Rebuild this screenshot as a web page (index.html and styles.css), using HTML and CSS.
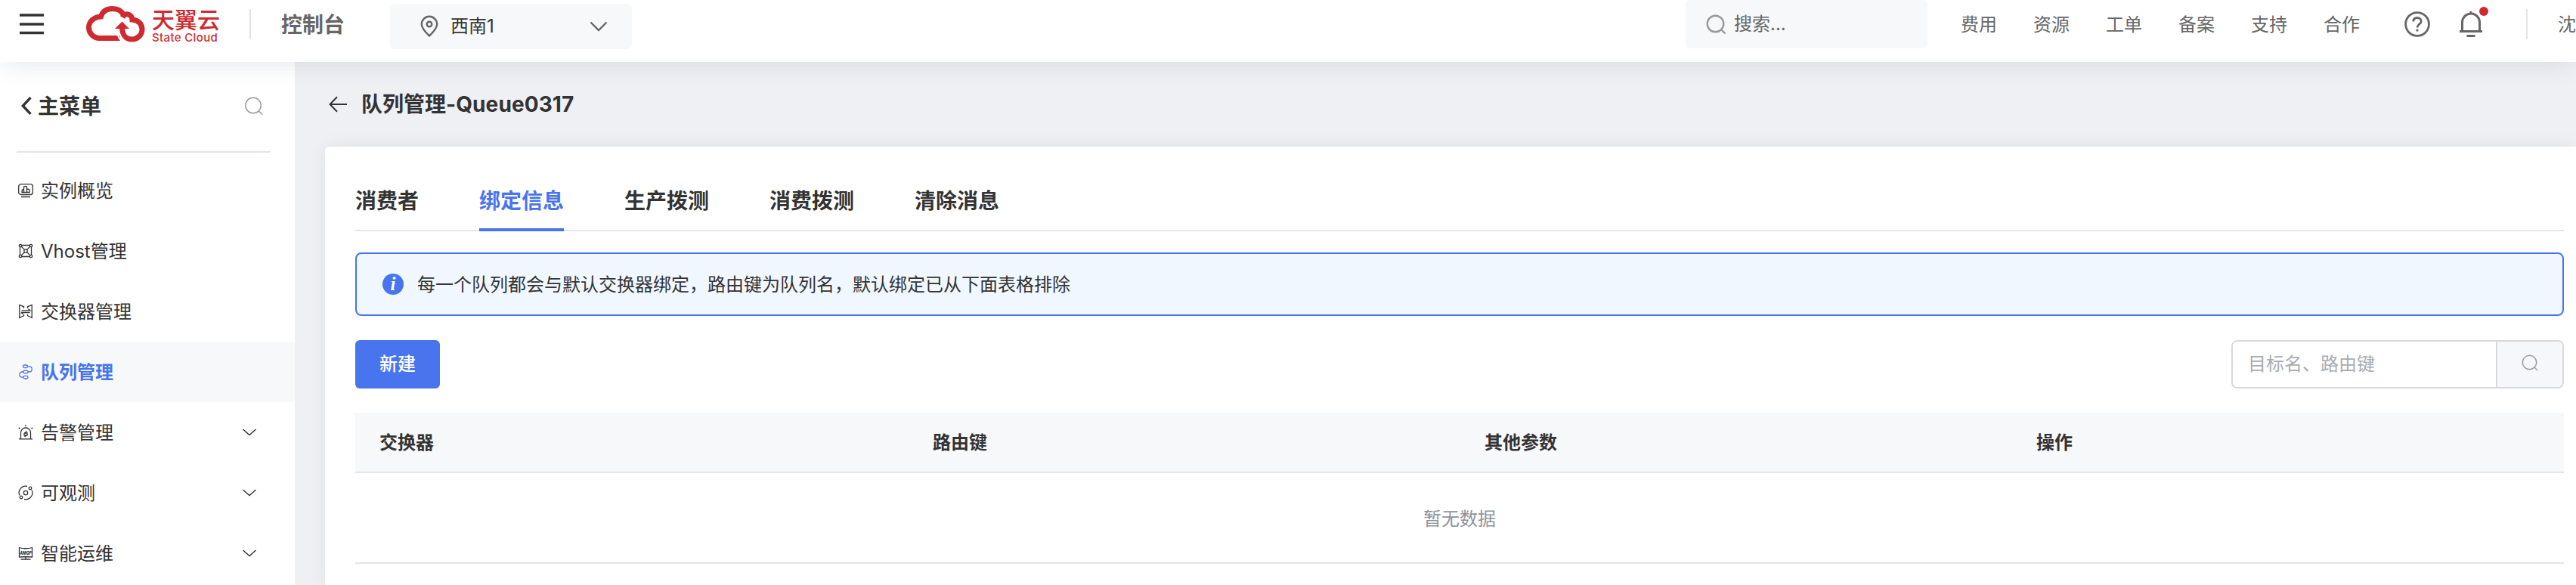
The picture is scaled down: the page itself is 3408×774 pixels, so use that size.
FILE: index.html
```html
<!DOCTYPE html>
<html lang="zh-CN">
<head>
    <meta charset="UTF-8">
    <title>队列管理</title>
    <link rel="stylesheet" href="styles.css">
</head>
<body>
<header class="header">
    <svg class="menu-btn" width="32" height="28" viewBox="0 0 32 28"><path d="M0 2h32M0 14h32M0 25.500h32" stroke="#333" stroke-width="3.400"/></svg>
    <div class="logo">
        <svg width="80" height="50" viewBox="0 0 80 50" fill="none">
            <path d="M46 43.500H19C10.500 43.500 4.500 37 4.500 29.500C4.500 21.500 11 15.500 20.500 15C22.500 8.500 28 4.500 36 4.500C43 4.500 48 7.500 50.500 13" stroke="#cf2a30" stroke-width="7"/>
            <path d="M49 16C53 8.500 62 12 62 19C70 19.500 75 25 75 32C75 39 69 45 61.500 45C54 45 48.500 39.500 48.500 29" stroke="#cf2a30" stroke-width="7"/>
            <path d="M39 31L48.500 21.500L58 31Z" fill="#cf2a30"/>
            <path d="M42.500 38C44 43 46 46 49.500 49.500" stroke="#fff" stroke-width="2.500"/>
        </svg>
        <div class="logo-text">
            <div class="logo-cn">天翼云</div>
            <div class="logo-en">State Cloud</div>
        </div>
    </div>
    <i class="line"></i>
    <span class="console">控制台</span>
    <div class="region">
        <svg width="24" height="30" viewBox="0 0 24 30" fill="none" stroke="#666" stroke-width="2.400"><path d="M12 27.500C9 24.500 1.800 18 1.800 12A10.200 10.200 0 0 1 22.200 12C22.200 18 15 24.500 12 27.500Z"/><circle cx="12" cy="12" r="3.300"/></svg>
        <span>西南1</span>
        <svg class="region-arrow" width="24" height="14" viewBox="0 0 24 14" fill="none" stroke="#666" stroke-width="2.400"><path d="M1.500 1.500L12 12L22.500 1.500"/></svg>
    </div>
    <div class="top-search">
        <svg width="27" height="27" viewBox="0 0 27 27" fill="none" stroke="#999" stroke-width="2.400"><circle cx="12.500" cy="12.500" r="10.800"/><path d="M19.500 19.500L25.500 25.500"/></svg>
        <span>搜索...</span>
    </div>
    <nav class="links">
        <a>费用</a><a>资源</a><a>工单</a><a>备案</a><a>支持</a><a>合作</a>
    </nav>
    <svg class="help" width="34" height="34" viewBox="0 0 34 34" fill="none" stroke="#666" stroke-width="2.800"><circle cx="17" cy="17" r="15.400"/><path d="M11.800 13.500C11.800 10.200 14 8.500 17 8.500S22.200 10.400 22.200 13.200C22.200 17 17 16.800 17 21.500M17 23.500V26.500"/></svg>
    <div class="bell">
        <svg width="32" height="36" viewBox="0 0 32 36" fill="none" stroke="#666" stroke-width="3"><path d="M16 1V5M4.500 27V15.500A11.500 11.500 0 0 1 27.500 15.500V27M1 27.500H31M10.500 33.500H21.500"/></svg>
        <i class="dot"></i>
    </div>
    <i class="line"></i>
    <span class="user">沈</span>
</header>
<div class="wrap">
    <aside class="side">
        <div class="side-title">
            <svg width="14" height="24" viewBox="0 0 14 24" fill="none" stroke="#333" stroke-width="3.400"><path d="M12.500 1.200L2.300 12L12.500 22.800"/></svg>
            <span>主菜单</span>
            <svg class="side-search" width="24" height="24" viewBox="0 0 24 24" fill="none" stroke="#999" stroke-width="1.500"><circle cx="11" cy="11.500" r="10.200"/><path d="M18.500 19L23.300 23.800"/></svg>
        </div>
        <ul class="menu">
            <li>
                <svg class="ico" viewBox="0 0 20 20"><rect x=".7" y="1.700" width="18.600" height="13.800" rx="3"/><path d="M4 18.500H16M7.500 12.500V5.500Q7.500 4.500 10 4.500Q11.500 4.500 11.500 5.500V12.500M7.500 8.500Q5 8.500 5 11.500V12.500H15V9.500Q15 8 11.500 8"/></svg>
                <span>实例概览</span>
            </li>
            <li>
                <svg class="ico" viewBox="0 0 20 20"><circle cx="3" cy="3" r="1.700"/><circle cx="17" cy="3" r="1.700"/><circle cx="3" cy="17" r="1.700"/><circle cx="17" cy="17" r="1.700"/><circle cx="10" cy="10" r="2.200"/><path d="M4.700 2.500H15.300M4.700 17.500H15.300M2.500 4.700V15.300M17.500 4.700V15.300M4.300 4.300L8.400 8.400M15.700 4.300L11.600 8.400M4.300 15.700L8.400 11.600M15.700 15.700L11.600 11.600"/></svg>
                <span>Vhost管理</span>
            </li>
            <li>
                <svg class="ico" viewBox="0 0 20 20"><path d="M7.500 6V3.800L1.800 1.500V18.500L7.500 15.500V14M12.500 6V3.800L18.200 1.500V18.500L12.500 15.500V14M4 11.500H15.500M3.800 11.800L6.500 13.500M4.500 8.800H16L13.500 6.800"/></svg>
                <span>交换器管理</span>
            </li>
            <li class="active">
                <svg class="ico" viewBox="0 0 20 20"><rect x="6.500" y="1" width="6" height="3.600" rx="1.800"/><rect x="7" y="8.200" width="6" height="3.600" rx="1.800"/><rect x="7" y="15.400" width="6" height="3.600" rx="1.800"/><path d="M12.500 2.800H14.500C19.500 2.800 19.500 10 14.500 10H13M7 10H5.500C.5 10 .5 17.200 5.500 17.200H7"/></svg>
                <span>队列管理</span>
            </li>
            <li>
                <svg class="ico" viewBox="0 0 20 20"><path d="M3.500 18.500V10.500A6.500 6.500 0 0 1 16.500 10.500V18.500M1 18.800H19M10 0V2.200M.8 3.800L2.500 5.500M19.200 3.800L17.500 5.500M11.500 8.500L8 11.500V14H11.500L8.500 16M8 11H12V13.500L8.500 16"/></svg>
                <span>告警管理</span>
                <svg class="arrow" viewBox="0 0 20 10"><path d="M1.500 1L10 8.500L18.500 1"/></svg>
            </li>
            <li>
                <svg class="ico" viewBox="0 0 20 20"><circle cx="10" cy="10" r="2.700"/><circle cx="16" cy="4" r="1.800"/><circle cx="4" cy="16" r="1.800"/><path d="M12 1.500A8.600 8.600 0 0 0 2 13.500M8 18.500A8.600 8.600 0 0 0 18 6.500"/></svg>
                <span>可观测</span>
                <svg class="arrow" viewBox="0 0 20 10"><path d="M1.500 1L10 8.500L18.500 1"/></svg>
            </li>
            <li>
                <svg class="ico" viewBox="0 0 20 20"><path d="M1.500 2.500Q10 5 18.500 2.500V15Q10 14 1.500 15ZM3.500 18H16.500M10 14.500V18"/><text x="2.200" y="11.500" textLength="15.600" lengthAdjust="spacingAndGlyphs">AMQP</text></svg>
                <span>智能运维</span>
                <svg class="arrow" viewBox="0 0 20 10"><path d="M1.500 1L10 8.500L18.500 1"/></svg>
            </li>
        </ul>
    </aside>
    <main class="main">
        <div class="page-title">
            <svg width="24" height="22" viewBox="0 0 24 22" fill="none" stroke="#333" stroke-width="2"><path d="M11 1.300L1.500 11L11 20.700M1.500 11H24"/></svg>
            <h1>队列管理<span>-Queue0317</span></h1>
        </div>
        <section class="card">
            <div class="tabs">
                <span>消费者</span>
                <span class="on">绑定信息</span>
                <span>生产拨测</span>
                <span>消费拨测</span>
                <span>清除消息</span>
            </div>
            <div class="alert">
                <i class="info">i</i>
                <span>每一个队列都会与默认交换器绑定，路由键为队列名，默认绑定已从下面表格排除</span>
            </div>
            <div class="tools">
                <button class="btn">新建</button>
                <div class="search">
                    <input type="text" placeholder="目标名、路由键">
                    <div class="search-btn">
                        <svg width="22" height="22" viewBox="0 0 22 22" fill="none" stroke="#999" stroke-width="1.500"><circle cx="10.500" cy="10.500" r="9.200"/><path d="M17 17L21 21"/></svg>
                    </div>
                </div>
            </div>
            <div class="table">
                <div class="thead">
                    <span>交换器</span>
                    <span>路由键</span>
                    <span>其他参数</span>
                    <span>操作</span>
                </div>
                <div class="empty">暂无数据</div>
            </div>
        </section>
    </main>
</div>
</body>
</html>
```

FILE: styles.css
```css
*{
    box-sizing: border-box;
}
body{
    margin: 0;
    height: 774px;
    overflow: hidden;
    background: #eff0f4;
    color: #333;
    font: 24px/32px Inter, "Noto Sans CJK SC", sans-serif;
}
svg{
    display: block;
    flex: none;
}
.header{
    position: relative;
    z-index: 2;
    display: flex;
    align-items: center;
    height: 82px;
    padding: 0 0 18px 26px;
    background: #fff;
    box-shadow: 0 8px 32px -4px rgba(60,80,120,.13);
    color: #666;
    white-space: nowrap;
}
.logo{
    display: flex;
    margin-left: 55px;
    width: 217px;
}
.logo-text{
    margin-left: 8px;
    color: #cf2a30;
}
.logo-cn{
    padding-top: 2px;
    font-size: 30px;
    font-weight: 500;
    line-height: 34px;
}
.logo-en{
    font-size: 15px;
    font-weight: 500;
    line-height: 14px;
    letter-spacing: .35px;
}
.line{
    width: 2px;
    height: 40px;
    background: #e4e4e4;
}
.console{
    margin-left: 40px;
    width: 144px;
    padding-top: 2px;
    font-size: 28px;
    font-weight: 600;
}
.region{
    display: flex;
    align-items: center;
    width: 320px;
    height: 60px;
    margin-top: 6px;
    padding: 0 32px 0 40px;
    border-radius: 6px;
    background: #f7f8fa;
    color: #333;
}
.region span{
    margin-left: 16px;
}
.region-arrow{
    margin-left: auto;
}
.top-search{
    display: flex;
    align-items: center;
    width: 320px;
    height: 64px;
    margin-left: auto;
    padding-left: 27px;
    border-radius: 6px;
    background: #f7f8fa;
}
.top-search span{
    margin-left: 10px;
}
.links{
    display: flex;
    gap: 48px;
    margin: 0 59px 0 44px;
    padding-top: 2px;
}
.bell{
    position: relative;
    margin: 0 57px 0 38px;
}
.dot{
    position: absolute;
    top: -5px;
    right: -7px;
    width: 12px;
    height: 12px;
    border-radius: 50%;
    background: #cf2a30;
}
.user{
    width: 24px;
    margin-left: 40px;
    padding-top: 2px;
}
.wrap{
    display: flex;
    height: 692px;
}
.side{
    flex: none;
    width: 390px;
    background: #fff;
}
.side-title{
    display: flex;
    align-items: center;
    height: 120px;
    margin: 0 32px 0 22px;
    padding: 0 10px 2px 6px;
    border-bottom: 2px solid #e1e4ea;
    font-size: 28px;
    font-weight: 600;
}
.side-title span{
    margin-left: 8px;
    padding-top: 2px;
}
.side-search{
    margin-left: auto;
}
.menu{
    margin: 0;
    padding: 10px 0 0;
    list-style: none;
}
.menu li{
    display: flex;
    align-items: center;
    height: 80px;
    padding: 0 50px 0 24px;
}
.menu li span{
    margin-left: 10px;
    padding-top: 2px;
}
.menu .active{
    background: #f7f8fa;
    color: #4874ee;
    font-weight: 600;
}
.ico{
    width: 20px;
    height: 20px;
    fill: none;
    stroke: currentColor;
    stroke-width: 1.300;
}
.ico text{
    font: italic 800 6px Inter, sans-serif;
    fill: #333;
    stroke: none;
}
.arrow{
    width: 20px;
    height: 10px;
    margin-left: auto;
    fill: none;
    stroke: #333;
    stroke-width: 1.500;
}
.main{
    display: flex;
    flex-direction: column;
    flex: 1;
    padding-left: 40px;
}
.page-title{
    display: flex;
    align-items: center;
    height: 112px;
    padding-left: 5px;
}
.page-title h1{
    margin: 0 0 0 19px;
    font-size: 28px;
    font-weight: 600;
}
.page-title h1 span{
    font-weight: 700;
    letter-spacing: .1px;
}
.card{
    flex: 1;
    padding: 32px 16px 0 40px;
    border-radius: 6px 0 0 0;
    background: #fff;
    box-shadow: 0 0 24px rgba(0,0,0,.07);
}
.tabs{
    display: flex;
    gap: 80px;
    height: 80px;
    border-bottom: 2px solid #e4e5ec;
    font-size: 28px;
    font-weight: 600;
    line-height: 81px;
}
.tabs .on{
    height: 80px;
    border-bottom: 4px solid #4874ee;
    color: #4874ee;
}
.alert{
    display: flex;
    align-items: center;
    height: 84px;
    margin: 28px 0 32px;
    padding-left: 34px;
    border: 2px solid #4874ee;
    border-radius: 8px;
    background: #f0f7ff;
}
.alert span{
    padding-top: 2px;
}
.info{
    width: 28px;
    height: 28px;
    margin-right: 18px;
    border-radius: 50%;
    background: #4874ee;
    color: #fff;
    font: italic bold 25px/27px "Liberation Serif", serif;
    text-align: center;
}
.tools{
    display: flex;
    justify-content: space-between;
}
.btn{
    width: 112px;
    height: 64px;
    padding: 0;
    border: 0;
    border-radius: 6px;
    background: #4874ee;
    color: #fff;
    font: inherit;
    font-weight: 500;
}
.search{
    display: flex;
    width: 440px;
    height: 64px;
    overflow: hidden;
    border: 2px solid #d8d8d8;
    border-radius: 8px;
}
.search input{
    flex: 1;
    min-width: 0;
    padding: 0 20px;
    border: 0;
    outline: 0;
    font: inherit;
}
.search input::placeholder{
    color: #a8abb2;
}
.search-btn{
    display: flex;
    align-items: center;
    justify-content: center;
    width: 88px;
    padding-bottom: 4px;
    border-left: 2px solid #d8d8d8;
    background: #f5f7fa;
}
.table{
    margin-top: 32px;
}
.thead{
    display: grid;
    grid-template-columns: 732px 730px 730px 1fr;
    height: 80px;
    border-bottom: 2px solid #e1e4ea;
    background: #f7f8fa;
    font-weight: 600;
    line-height: 79px;
}
.thead span{
    padding-left: 32px;
}
.empty{
    height: 120px;
    border-bottom: 2px solid #e1e4ea;
    color: #909399;
    line-height: 121px;
    text-align: center;
}
```
